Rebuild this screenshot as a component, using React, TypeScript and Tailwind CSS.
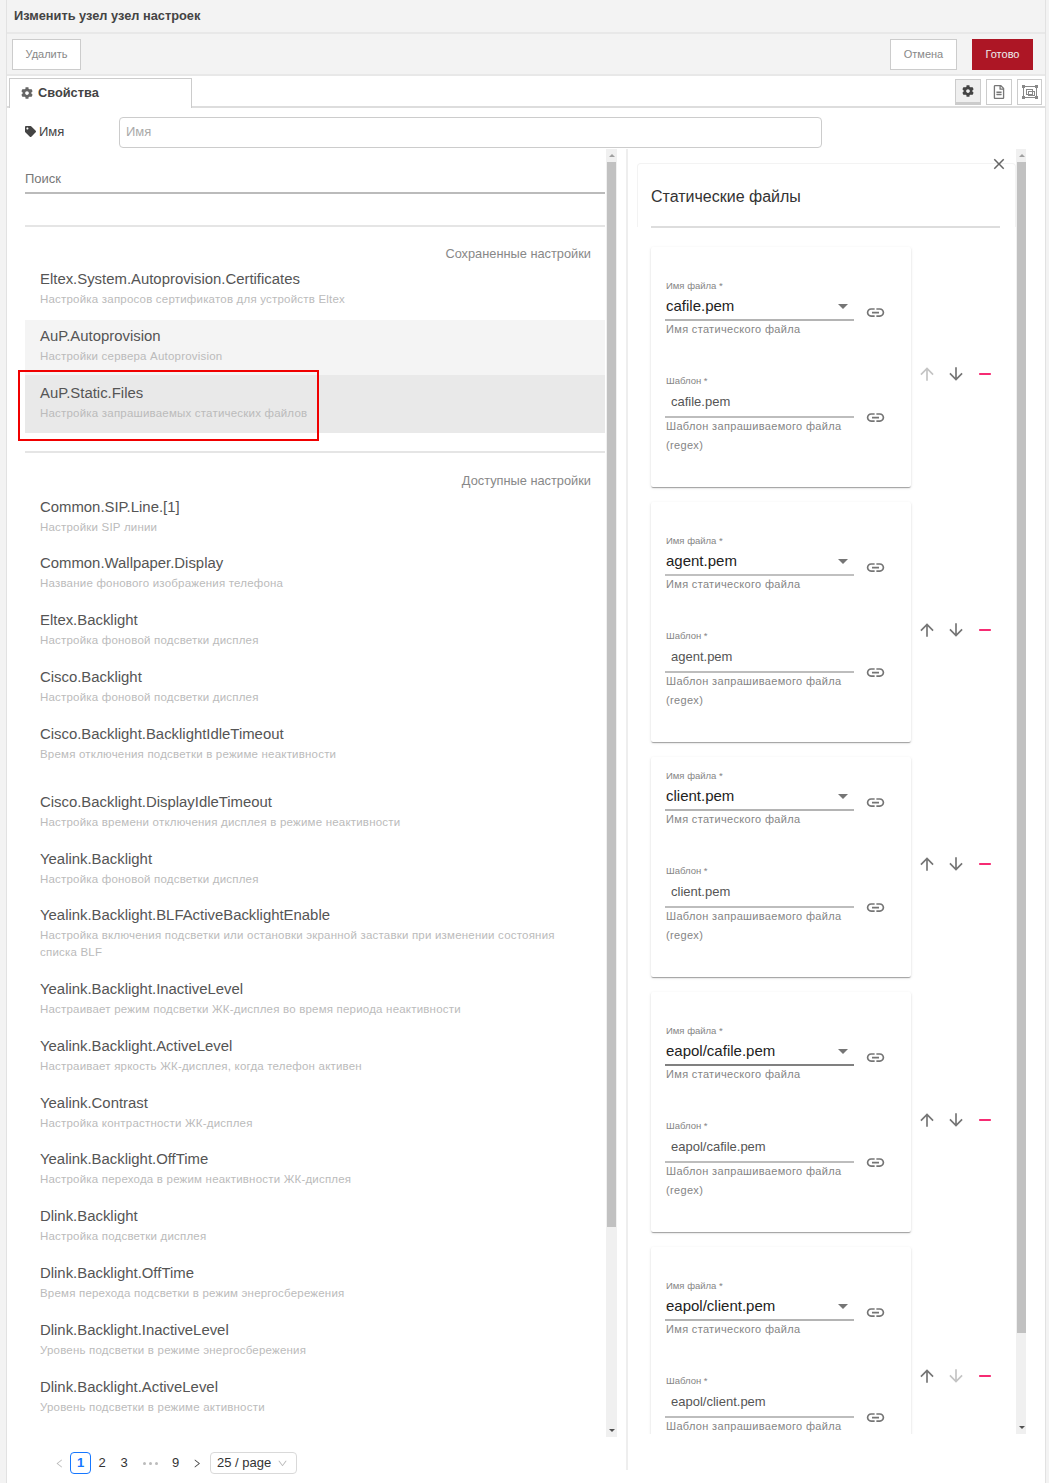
import React from "react";
import { FaCog, FaTag, FaRegFileAlt } from "react-icons/fa";
import { MdArrowDownward, MdArrowUpward, MdClose, MdLink, MdRemove } from "react-icons/md";
import { AiOutlineDown, AiOutlineLeft, AiOutlineRight } from "react-icons/ai";

type Setting = { title: string; desc: string; h: string; bg?: string; pad?: string };
type FileCard = { name: string; pt: string; arrows: string; line: string; firstUp?: boolean; lastDown?: boolean };

const saved: Setting[] = [
  { title: "Eltex.System.Autoprovision.Certificates", desc: "Настройка запросов сертификатов для устройств Eltex", h: "h-[57px]" },
  { title: "AuP.Autoprovision", desc: "Настройки сервера Autoprovision", h: "h-[55px]", bg: "bg-[#f4f4f4]" },
  { title: "AuP.Static.Files", desc: "Настройка запрашиваемых статических файлов", h: "h-[58px]", bg: "bg-[#e9e9e9]", pad: "pt-[7px]" },
];

const available: Setting[] = [
  { title: "Common.SIP.Line.[1]", desc: "Настройки SIP линии", h: "h-[56px]" },
  { title: "Common.Wallpaper.Display", desc: "Название фонового изображения телефона", h: "h-[57px]" },
  { title: "Eltex.Backlight", desc: "Настройка фоновой подсветки дисплея", h: "h-[57px]" },
  { title: "Cisco.Backlight", desc: "Настройка фоновой подсветки дисплея", h: "h-[57px]" },
  { title: "Cisco.Backlight.BacklightIdleTimeout", desc: "Время отключения подсветки в режиме неактивности", h: "h-[68px]" },
  { title: "Cisco.Backlight.DisplayIdleTimeout", desc: "Настройка времени отключения дисплея в режиме неактивности", h: "h-[57px]" },
  { title: "Yealink.Backlight", desc: "Настройка фоновой подсветки дисплея", h: "h-[56px]" },
  { title: "Yealink.Backlight.BLFActiveBacklightEnable", desc: "Настройка включения подсветки или остановки экранной заставки при изменении состояния списка BLF", h: "h-[74px]" },
  { title: "Yealink.Backlight.InactiveLevel", desc: "Настраивает режим подсветки ЖК-дисплея во время периода неактивности", h: "h-[57px]" },
  { title: "Yealink.Backlight.ActiveLevel", desc: "Настраивает яркость ЖК-дисплея, когда телефон активен", h: "h-[57px]" },
  { title: "Yealink.Contrast", desc: "Настройка контрастности ЖК-дисплея", h: "h-[56px]" },
  { title: "Yealink.Backlight.OffTime", desc: "Настройка перехода в режим неактивности ЖК-дисплея", h: "h-[57px]" },
  { title: "Dlink.Backlight", desc: "Настройка подсветки дисплея", h: "h-[57px]" },
  { title: "Dlink.Backlight.OffTime", desc: "Время перехода подсветки в режим энергосбережения", h: "h-[57px]" },
  { title: "Dlink.Backlight.InactiveLevel", desc: "Уровень подсветки в режиме энергосбережения", h: "h-[57px]" },
  { title: "Dlink.Backlight.ActiveLevel", desc: "Уровень подсветки в режиме активности", h: "h-[57px]" },
];

const files: FileCard[] = [
  { name: "cafile.pem", pt: "pt-[31px]", arrows: "top-[117px]", line: "border-[#b4b4b4]", firstUp: true },
  { name: "agent.pem", pt: "pt-[31px]", arrows: "top-[118px]", line: "border-[#c0c0c0]" },
  { name: "client.pem", pt: "pt-[11px]", arrows: "top-[97px]", line: "border-[#b4b4b4]" },
  { name: "eapol/cafile.pem", pt: "pt-[31px]", arrows: "top-[118px]", line: "border-[#808080]" },
  { name: "eapol/client.pem", pt: "pt-[31px]", arrows: "top-[119px]", line: "border-[#b4b4b4]", lastDown: true },
];

function SettingRow({ item }: { item: Setting }) {
  return (
    <div className={`${item.h} ${item.pad ?? "pt-[5px]"} ${item.bg ?? ""} shrink-0 px-[15px]`}>
      <div className="text-[14.9px] leading-[22px] text-[#555]">{item.title}</div>
      <div className="mt-[0.5px] text-[11.5px] leading-[17px] tracking-[0.2px] text-[#bbb]">{item.desc}</div>
    </div>
  );
}

function Scrollbar({ thumb }: { thumb: string }) {
  return (
    <div className="flex w-[11px] shrink-0 flex-col bg-[#f0f0f0]">
      <div className="flex h-[13px] items-center justify-center">
        <div className="h-0 w-0 border-x-[3px] border-b-[3px] border-x-transparent border-b-[#a0a0a0]" />
      </div>
      <div className={`${thumb} mx-[1px] bg-[#c1c1c1]`} />
      <div className="mt-auto flex h-[13px] items-center justify-center">
        <div className="h-0 w-0 border-x-[3px] border-t-[3px] border-x-transparent border-t-[#505050]" />
      </div>
    </div>
  );
}

function StaticFileCard({ card }: { card: FileCard }) {
  return (
    <div className="relative mb-[15px] flex shrink-0">
      <div className={`${card.pt} w-[260px] shrink-0 rounded-[2px] bg-white pb-[32px] pl-[14px] shadow-[0_2px_1px_-1px_rgba(0,0,0,0.2),0_1px_1px_0_rgba(0,0,0,0.14),0_1px_3px_0_rgba(0,0,0,0.12)]`}>
        <div className="h-[97px]">
          <div className="flex">
            <div className="w-[189px] shrink-0">
              <div className="pl-[1px] pt-[2px] text-[9.5px] leading-[12px] text-[#858585]">Имя файла *</div>
              <div className={`${card.line} flex h-[29px] items-center justify-between border-b-2 pl-[1px] pr-[5px] pt-[1px] text-[15px] text-[#222]`}>
                <span>{card.name}</span>
                <span className="mr-[1px] h-0 w-0 border-x-[5px] border-t-[5px] border-x-transparent border-t-[#757575]" />
              </div>
              <div className="-mt-[1px] pl-[1px] text-[11px] leading-[19px] tracking-[0.33px] text-[#858585]">Имя статического файла</div>
            </div>
            <MdLink className="ml-[11px] mt-[24px] shrink-0 text-[21px] text-[#757575]" />
          </div>
        </div>
        <div className="flex">
          <div className="w-[189px] shrink-0">
            <div className="pl-[1px] text-[9.5px] leading-[12px] text-[#858585]">Шаблон *</div>
            <div className="flex h-[31px] items-center border-b-2 border-[#bdbdbd] pl-[6px] pt-[1px] text-[13px] text-[#555]">{card.name}</div>
            <div className="-mt-[1px] pl-[1px] text-[11px] leading-[19px] tracking-[0.33px] text-[#858585]">Шаблон запрашиваемого файла (regex)</div>
          </div>
          <MdLink className="ml-[11px] mt-[32px] shrink-0 text-[21px] text-[#757575]" />
        </div>
      </div>
      <div className={`${card.arrows} absolute left-[266px] flex items-center gap-[9px] text-[20px]`}>
        <MdArrowUpward className={card.firstUp ? "text-[#c4c4c4]" : "text-[#757575]"} />
        <MdArrowDownward className={card.lastDown ? "text-[#c4c4c4]" : "text-[#757575]"} />
        <MdRemove className="text-[#f50057]" />
      </div>
    </div>
  );
}

function Pagination() {
  return (
    <div className="ml-[27px] mt-[15px] flex h-[22px] items-center text-[13px] text-[#333]">
      <AiOutlineLeft className="w-[15px] text-[11px] text-[#bbb]" />
      <span className="ml-[3px] flex h-[22px] w-[21px] items-center justify-center rounded-[4px] border border-[#1677ff] font-bold text-[#1677ff]">1</span>
      <span className="w-[22px] text-center">2</span>
      <span className="w-[22px] text-center">3</span>
      <span className="flex w-[30px] items-center justify-center gap-[3px]">
        <span className="h-[3px] w-[3px] rounded-full bg-[#bbb]" />
        <span className="h-[3px] w-[3px] rounded-full bg-[#bbb]" />
        <span className="h-[3px] w-[3px] rounded-full bg-[#bbb]" />
      </span>
      <span className="w-[21px] text-center">9</span>
      <AiOutlineRight className="ml-[5px] w-[12px] text-[11px] text-[#444]" />
      <span className="ml-[7px] flex h-[22px] w-[87px] items-center gap-[6px] rounded-[4px] border border-[#d9d9d9] pl-[6px]">
        25 / page
        <AiOutlineDown className="text-[11px] text-[#bbb]" />
      </span>
    </div>
  );
}

export default function App() {
  return (
    <div className="relative flex h-[1483px] w-[1049px] overflow-hidden bg-white font-['Liberation_Sans',sans-serif]">
      <div className="w-[7px] shrink-0 border-r border-[#e2e2e2] bg-[#f3f3f3]" />
      <div className="flex min-w-0 flex-1 flex-col">
        <div className="flex h-[34px] shrink-0 items-center border-b-2 border-[#e8e8e8] bg-[#f3f3f3] pl-[7px] text-[12.8px] font-bold text-[#444]">
          Изменить узел узел настроек
        </div>
        <div className="flex h-[42px] shrink-0 items-center justify-between border-b-2 border-[#e8e8e8] bg-[#f3f3f3] pl-[5px] pr-[12px]">
          <button className="h-[31px] w-[69px] border border-[#ccc] bg-white text-[11px] text-[#888]">Удалить</button>
          <div className="flex gap-[15px]">
            <button className="h-[31px] w-[67px] border border-[#ccc] bg-white text-[11px] text-[#888]">Отмена</button>
            <button className="h-[31px] w-[61px] border border-[#ad1625] bg-[#ad1625] text-[11px] text-[#eee]">Готово</button>
          </div>
        </div>
        <div className="flex h-[32px] shrink-0 items-end justify-between border-b-2 border-[#ddd]">
          <div className="-mb-[2px] ml-[2px] flex h-[30px] w-[183px] items-center gap-[5px] border-x border-t border-[#ccc] bg-white pb-[2px] pl-[11px] text-[12.8px] font-bold text-[#444]">
            <FaCog className="text-[12px] text-[#666]" />
            Свойства
          </div>
          <div className="mb-[1px] flex gap-[5px] pr-[3px]">
            <div className="flex h-[26px] w-[26px] items-center justify-center border border-b-[3px] border-[#ccc] bg-[#efefef]">
              <FaCog className="text-[12px] text-[#444]" />
            </div>
            <div className="flex h-[26px] w-[26px] items-center justify-center border border-[#ccc] bg-white">
              <FaRegFileAlt className="text-[14px] text-[#777]" />
            </div>
            <div className="flex h-[26px] w-[25px] items-center justify-center border border-[#ccc] bg-white">
              <svg width="16" height="14" viewBox="0 0 16 14" fill="none" stroke="#888" strokeWidth="1">
                <rect x="1.5" y="1.5" width="13" height="11" />
                <rect x="4.5" y="4.5" width="6" height="5" />
                <rect x="6.5" y="6.5" width="6" height="4" />
                <rect x="0" y="0" width="3" height="3" fill="#888" stroke="none" />
                <rect x="13" y="0" width="3" height="3" fill="#888" stroke="none" />
                <rect x="0" y="11" width="3" height="3" fill="#888" stroke="none" />
                <rect x="13" y="11" width="3" height="3" fill="#888" stroke="none" />
              </svg>
            </div>
          </div>
        </div>

        <div className="flex h-[41px] shrink-0 items-start pl-[18px] pt-[9px]">
          <div className="flex h-[31px] w-[94px] items-center gap-[3px] pb-[2px] text-[13px] text-[#444]">
            <FaTag className="text-[11px] text-[#444]" />
            Имя
          </div>
          <div className="flex h-[31px] w-[703px] items-center rounded-[4px] border border-[#ccc] px-[6px] pb-[2px] text-[13px] text-[#aaa]">Имя</div>
        </div>

        <div className="flex h-[1321px] min-h-0 pl-[18px]">
          <div className="flex w-[592px] shrink-0 flex-col">
            <div className="flex h-[1288px] shrink-0 overflow-hidden">
              <div className="flex w-[581px] shrink-0 flex-col pr-[1px]">
                <div className="h-[45px] shrink-0 border-b-2 border-[#bbb] pt-[20px] text-[13px] leading-[19px] text-[#777]">Поиск</div>
                <div className="mt-[31px] shrink-0 border-b-2 border-[#e5e5e5]" />
                <div className="h-[36px] shrink-0 pr-[14px] pt-[17px] text-right text-[12.8px] leading-[19px] text-[#888]">Сохраненные настройки</div>
                {saved.map((s) => (
                  <SettingRow key={s.title} item={s} />
                ))}
                <div className="mt-[18px] shrink-0 border-b-2 border-[#e5e5e5]" />
                <div className="h-[38px] shrink-0 pr-[14px] pt-[18px] text-right text-[12.8px] leading-[19px] text-[#888]">Доступные настройки</div>
                {available.map((s) => (
                  <SettingRow key={s.title} item={s} />
                ))}
              </div>
              <Scrollbar thumb="h-[1065px]" />
            </div>
            <Pagination />
          </div>

          <div className="ml-[9px] flex h-[1321px] w-[400px] shrink-0 border-l-2 border-[#eee] pl-[9px]">
            <div className="flex h-[1285px] min-w-0 flex-1 overflow-hidden">
              <div className="relative w-[379px] shrink-0 overflow-hidden pt-[14px]">
                <div className="h-[64px] rounded-t-[4px] border-x border-t border-[#f3f3f3] pt-[21px]">
                  <div className="ml-[13px] mr-[15px] h-[43px] border-b-2 border-[#ddd] text-[16px] leading-[24px] text-[#333]">Статические файлы</div>
                </div>
                <div className="flex flex-col pl-[14px] pt-[20px]">
                  {files.map((c) => (
                    <StaticFileCard key={c.name} card={c} />
                  ))}
                </div>
                <MdClose className="absolute right-[8px] top-[6px] text-[18px] text-[#666]" />
              </div>
              <Scrollbar thumb="h-[1171px]" />
            </div>
          </div>
        </div>
      </div>
      <div className="w-[4px] shrink-0 border-l border-[#e2e2e2] bg-[#f3f3f3]" />

      <div className="absolute left-[18px] top-[370px] h-[71px] w-[301px] border-2 border-[#f00000]" />
    </div>
  );
}
